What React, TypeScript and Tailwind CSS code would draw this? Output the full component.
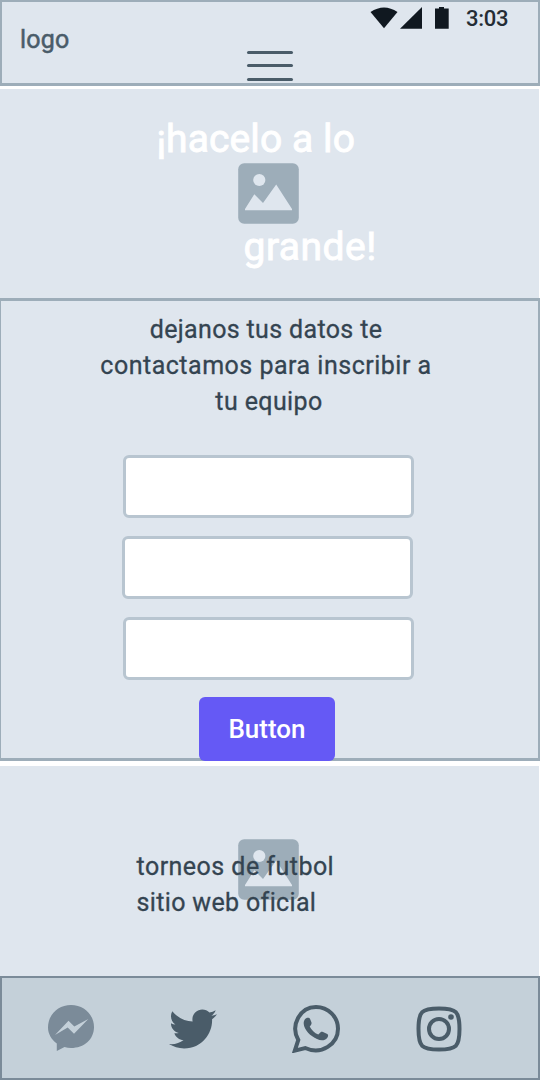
import type { ReactNode } from "react";
import { FaTwitter } from "react-icons/fa";

function ImagePlaceholder() {
  return (
    <svg viewBox="0 0 61 61" className="block h-[61px] w-[61px] shrink-0" aria-hidden="true">
      <rect x="0.2" y="0.2" width="60.6" height="60.6" rx="6" fill="#9dadb9" />
      <circle cx="21.3" cy="17" r="6.1" fill="#dfe6ee" />
      <path d="M7 47.2V46L16.3 31.3L25 40L38.2 21.5L54 46V47.2Z" fill="#dfe6ee" />
    </svg>
  );
}

function StatusBar() {
  return (
    <div className="flex h-[30px] items-start pl-[368px] pt-[5px]">
      <svg viewBox="0 0 80 23" className="block h-[23px] w-[80px] shrink-0" fill="#101820" aria-hidden="true">
        <path d="M0.5 5Q14 -4 27.5 5L14 21.2Z" />
        <path d="M30 21.7L52 0V21.7Z" />
        <path d="M65 1.5H69V0H74V1.5H78.7V21.7H65Z" />
      </svg>
      <span className="-mt-[1px] ml-[16px] text-[22px] leading-[25px] font-medium tracking-[-0.3px] text-[#242c34]">3:03</span>
    </div>
  );
}

function Header() {
  return (
    <header className="relative h-[86px] shrink-0 border-x-2 border-t-2 border-b-3 border-[#9dadb9] bg-[#dfe6ee]">
      <StatusBar />
      <span className="absolute left-[18px] top-[22px] text-[25px] leading-[32px] tracking-[0.2px] text-[#4a5c69] [-webkit-text-stroke:0.5px_#4a5c69]">logo</span>
      <button aria-label="menu" className="ml-[245px] mt-[18.5px] flex w-[46px] flex-col gap-[10.5px]">
        <span className="h-[3px] w-full rounded-full bg-[#4a5c69]" />
        <span className="h-[3px] w-full rounded-full bg-[#4a5c69]" />
        <span className="h-[3px] w-full rounded-full bg-[#4a5c69]" />
      </button>
    </header>
  );
}

function Hero() {
  return (
    <section className="mt-[3px] h-[209px] w-[539px] shrink-0 bg-[#dfe6ee] pt-[26px] text-[39px] leading-[48px] text-white [-webkit-text-stroke:0.9px_white]">
      <p className="ml-[156.5px] whitespace-nowrap tracking-[0.1px]">¡hacelo a lo</p>
      <div className="ml-[238px]">
        <ImagePlaceholder />
      </div>
      <p className="-mt-[1px] ml-[243.5px] whitespace-nowrap tracking-[0.5px]">grande!</p>
    </section>
  );
}

function Field({ className }: { className: string }) {
  return (
    <input
      type="text"
      className={`block h-[63px] w-[291px] shrink-0 rounded-[6px] border-3 border-[#b8c5d0] bg-white px-4 text-[22px] outline-none ${className}`}
    />
  );
}

function ContactForm() {
  return (
    <section className="flex h-[463px] shrink-0 flex-col border-r-2 border-l border-y-3 border-[#9dadb9] bg-[#dfe6ee] pt-[11px]">
      <div className="ml-px flex w-[528px] flex-col items-center text-[25px] leading-[36px] whitespace-nowrap text-[#344451] [-webkit-text-stroke:0.3px_#344451]">
        <p className="tracking-[0.35px]">dejanos tus datos te</p>
        <p className="tracking-[0.5px]">contactamos para inscribir a</p>
        <p className="ml-[6px] tracking-[0.4px]">tu equipo</p>
      </div>
      <Field className="mt-[35px] ml-[122px]" />
      <Field className="mt-[18px] ml-[120.5px]" />
      <Field className="mt-[18px] ml-[122px]" />
      <button className="relative mt-[17px] ml-[198px] h-[64px] w-[136px] shrink-0 rounded-[6px] bg-[#6559f5] pb-[1px] text-[26px] leading-[36px] font-medium text-white">
        Button
      </button>
    </section>
  );
}

function About() {
  return (
    <section className="relative mt-[5px] h-[210px] w-[539px] shrink-0 bg-[#dfe6ee] pt-[73px] pl-[238px]">
      <ImagePlaceholder />
      <p className="absolute left-[136.5px] top-[83px] text-[25px] leading-[36px] tracking-[0.47px] whitespace-nowrap text-[#344451] [-webkit-text-stroke:0.3px_#344451]">
        torneos de futbol
        <br />
        <span className="tracking-[0.35px]">sitio web oficial</span>
      </p>
    </section>
  );
}

function SocialLink({ label, className, children }: { label: string; className: string; children: ReactNode }) {
  return (
    <a href="#" aria-label={label} className={`block h-[48px] w-[48px] shrink-0 ${className}`}>
      {children}
    </a>
  );
}

function Footer() {
  return (
    <footer className="flex h-[104px] shrink-0 border-2 border-[#7b8b99] bg-[#c4d0d9] pt-[27px] pl-[45px]">
      <SocialLink label="Messenger" className="">
        <svg viewBox="0 0 48 48" className="block h-full w-full">
          <path d="M24 0C11 0 1 9.8 1 22.5C1 29 4.5 34.5 9.8 38.5V46L17.5 42C19.5 42.7 21.8 43 24 43C37 43 47 34.5 47 22C47 9.8 37 0 24 0Z" fill="#7b8b99" />
          <path d="M8 30L21.5 15.7L27.3 21.4L41.3 14L27 28.7L20.7 22.5Z" fill="#c4d0d9" />
        </svg>
      </SocialLink>
      <SocialLink label="Twitter" className="ml-[74px]">
        <FaTwitter className="block h-[48px] w-[48px] text-[#4a5c69]" />
      </SocialLink>
      <SocialLink label="WhatsApp" className="ml-[75px]">
        <svg viewBox="0 0 48 48" className="block h-full w-full">
          <path d="M2.8 45.6L6.3 35C-2 20.5 8 2 24 2C36.2 2 46 11.8 46 23.8C46 39 29.5 50.5 13.2 43Z" fill="none" stroke="#4a5c69" strokeWidth="4" />
          <path d="M14.2 13.2C15.8 12.5 17.6 12.8 18.2 14.2L19.5 17.4C20 18.8 18.6 20.4 17.7 21.5C19.5 25.2 22.5 28 26.3 29.6L28.6 27.2C29.3 26.5 30.2 26.6 31 27L35.3 29.1C36.6 29.8 36.2 31.5 35.3 32.7C32.7 36 28.7 35.7 25 34C18.8 31.5 12 24.8 11.7 18.8C11.5 16.3 12.5 14 14.2 13.2Z" fill="#4a5c69" />
        </svg>
      </SocialLink>
      <SocialLink label="Instagram" className="ml-[75px]">
        <svg viewBox="0 0 48 48" className="block h-full w-full" fill="none" stroke="#4a5c69" strokeWidth="4">
          <path d="M24 3.5C6.5 3.5 3.5 6.5 3.5 24C3.5 41.5 6.5 44.5 24 44.5C41.5 44.5 44.5 41.5 44.5 24C44.5 6.5 41.5 3.5 24 3.5Z" />
          <circle cx="24" cy="24" r="10" />
          <circle cx="36" cy="12" r="2.8" fill="#4a5c69" stroke="none" />
        </svg>
      </SocialLink>
    </footer>
  );
}

export default function App() {
  return (
    <main className="flex h-[1080px] w-[540px] flex-col overflow-hidden bg-white font-['Roboto','Liberation_Sans',sans-serif]">
      <Header />
      <Hero />
      <ContactForm />
      <About />
      <Footer />
    </main>
  );
}
